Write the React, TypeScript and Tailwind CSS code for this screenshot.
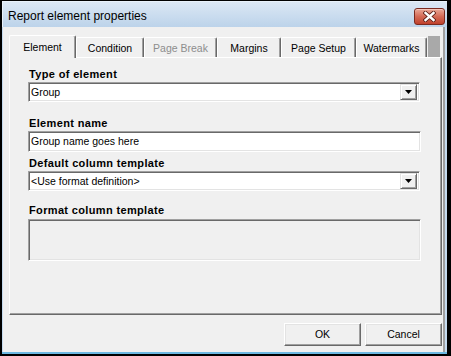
import React from "react";

const tabs = [
  { label: "Element", w: "w-[67px]", selected: true },
  { label: "Condition", w: "w-[68px]" },
  { label: "Page Break", w: "w-[73px]", disabled: true },
  { label: "Margins", w: "w-[64px]" },
  { label: "Page Setup", w: "w-[75px]" },
  { label: "Watermarks", w: "w-[71px]" },
];

function DropArrow() {
  return (
    <div className="w-[17px] h-[16px] bg-[#f0f0f0] border border-t-[#e3e3e3] border-l-[#e3e3e3] border-r-[#696969] border-b-[#696969] shadow-[inset_1px_1px_0_#ffffff,inset_-1px_-1px_0_#a0a0a0] flex items-center justify-center">
      <svg width="7" height="4" viewBox="0 0 7 4">
        <polygon points="0,0 7,0 3.5,4" fill="#000" />
      </svg>
    </div>
  );
}

function Select({ value }: { value: string }) {
  return (
    <div className="w-[392px] h-[20px] bg-white border border-t-[#a0a0a0] border-l-[#a0a0a0] border-r-white border-b-white shadow-[inset_1px_1px_0_#696969,inset_-1px_-1px_0_#e3e3e3] flex items-center pl-[2px] pr-[2px]">
      <span className="flex-1 text-[10.5px] leading-[13px] text-black">{value}</span>
      <DropArrow />
    </div>
  );
}

function Label({ children, className }: { children: React.ReactNode; className?: string }) {
  return (
    <div className={"h-[13px] text-[11px] leading-[16px] font-bold tracking-[0.35px] text-black " + (className || "")}>
      {children}
    </div>
  );
}

function Button({ children }: { children: React.ReactNode }) {
  return (
    <div className="w-[77px] h-[23px] bg-[#f0f0f0] border border-t-white border-l-white border-r-[#696969] border-b-[#696969] shadow-[inset_-1px_-1px_0_#a0a0a0,inset_1px_1px_0_#e3e3e3] flex items-center justify-center text-[10.5px] text-black">
      {children}
    </div>
  );
}

export default function App() {
  return (
    <div className="w-[451px] h-[356px] bg-black flex flex-col pt-px pl-[2px] pr-[4px] pb-[2px] font-['Liberation_Sans',Arial,sans-serif]">
      <div className="flex-1 flex flex-col bg-[#c5dbf0] border-b-2 border-[#6cb8e2]">
        {/* Title bar */}
        <div className="h-[26px] flex items-start bg-gradient-to-b from-[#dbe7f4] to-[#bcd3ea] border-t border-l border-[#e8f1fa]">
          <div className="pl-[5px] pt-[7px] text-[12px] leading-[14px] text-black flex-1">Report element properties</div>
          <div className="mt-[6px] mr-[2px] w-[31px] h-[17px] rounded-[3px] border border-[#7b2a1f] bg-gradient-to-b from-[#e9a898] via-[#d46a56] to-[#c0402b] shadow-[inset_0_1px_0_#f4c6ba] flex items-center justify-center">
            <svg width="13" height="11" viewBox="0 0 13 11">
              <path d="M2.5 2 L10.5 9 M10.5 2 L2.5 9" stroke="#5a1e16" strokeWidth="4.2" strokeLinecap="square" />
              <path d="M2.5 2 L10.5 9 M10.5 2 L2.5 9" stroke="#ffffff" strokeWidth="2.4" strokeLinecap="square" />
            </svg>
          </div>
        </div>
        {/* Client */}
        <div className="flex-1 ml-px mr-[2px] bg-[#f0f0f0] border-r-2 border-[#a0a0a0] flex flex-col">
          <div className="ml-[6px] mt-[8px] w-[433px] flex flex-col">
            {/* Tab row */}
            <div className="h-[22px] flex items-end">
              {tabs.map((t) => (
                <div
                  key={t.label}
                  className={
                    t.w +
                    " flex justify-center bg-[#f0f0f0] border-l border-t border-r border-l-white border-t-white border-r-[#696969] rounded-t-[2px] shadow-[inset_-1px_0_0_#a0a0a0] text-[10.5px] leading-[13px] " +
                    (t.selected ? "h-[23px] -mb-px relative z-10 pt-[5px]" : "h-[20px] pt-[4px]") +
                    (t.disabled ? " text-[#8d8d8d]" : " text-black")
                  }
                >
                  {t.label}
                </div>
              ))}
              <div className="ml-px w-[12px] h-[21px] bg-[#a9a9a9]" />
            </div>
            {/* Panel */}
            <div className="h-[258px] bg-[#f0f0f0] border border-t-white border-l-white border-r-[#696969] border-b-[#696969] shadow-[inset_-1px_-1px_0_#a0a0a0] pl-[18px] pt-[8px] flex flex-col">
              <Label className="pl-px">Type of element</Label>
              <div className="mt-[3px]">
                <Select value="Group" />
              </div>
              <Label className="pl-px mt-[13px]">Element name</Label>
              <div className="mt-[3px] w-[393px] h-[21px] bg-white border border-t-[#a0a0a0] border-l-[#a0a0a0] border-r-white border-b-white shadow-[inset_1px_1px_0_#696969,inset_-1px_-1px_0_#e3e3e3] flex items-center pl-[2px] text-[10.5px] leading-[13px] text-black">
                Group name goes here
              </div>
              <Label className="pl-px mt-[3px]">Default column template</Label>
              <div className="mt-[3px]">
                <Select value="<Use format definition>" />
              </div>
              <Label className="pl-px mt-[11px]">Format column template</Label>
              <div className="mt-[4px] w-[393px] h-[42px] bg-[#f0f0f0] border border-t-[#a0a0a0] border-l-[#a0a0a0] border-r-white border-b-white shadow-[inset_1px_1px_0_#696969,inset_-1px_-1px_0_#e3e3e3]" />
            </div>
          </div>
          {/* Buttons */}
          <div className="mt-[8px] mr-px flex justify-end gap-[4px]">
            <Button>OK</Button>
            <Button>Cancel</Button>
          </div>
        </div>
      </div>
    </div>
  );
}
